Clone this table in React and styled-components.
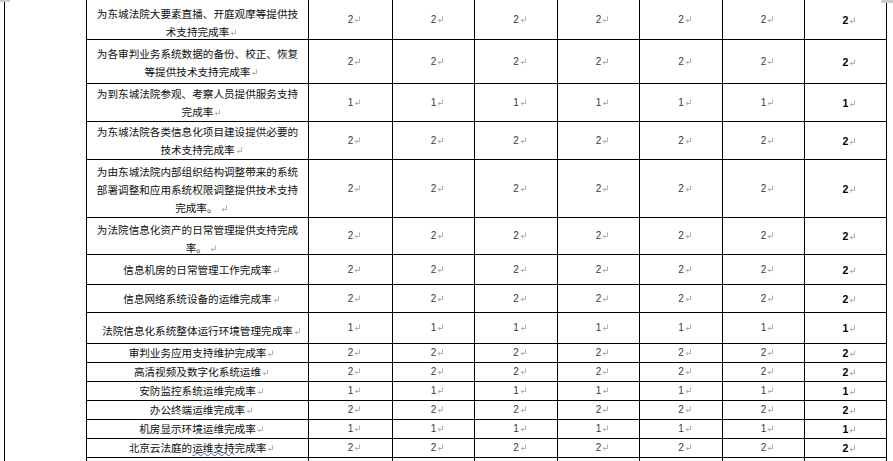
import React from 'react';
import styled, { createGlobalStyle } from 'styled-components';

const Global = createGlobalStyle`
  html, body { margin: 0; padding: 0; background: #fff; }
  body { font-family: "Liberation Sans", "Noto Sans CJK SC", sans-serif; overflow: hidden; }
`;

const Page = styled.div`
  position: relative;
  width: 893px;
  height: 461px;
  overflow: hidden;
  padding-left: 4px;
  box-sizing: border-box;
  background: #fff;
`;

const Handle = styled.div`
  position: absolute;
  top: 0;
  left: ${(p) => p.$left}px;
  width: ${(p) => p.$w}px;
  height: ${(p) => p.$h}px;
  background: #c9c9c9;
`;

const Table = styled.div`
  display: flex;
  align-items: stretch;
  width: 883px;
  border-left: 1px solid #000;
`;

const MergedCell = styled.div`
  flex: 0 0 82px;
  box-sizing: border-box;
  border-right: 1px solid #000;
`;

const Body = styled.div`
  display: flex;
  flex-direction: column;
  width: 800px;
`;

const Row = styled.div`
  display: flex;
  height: ${(p) => p.$h}px;
  flex: 0 0 auto;
`;

const Cell = styled.div`
  box-sizing: border-box;
  width: ${(p) => p.$w}px;
  flex: 0 0 auto;
  border-right: 1px solid #000;
  border-bottom: 1px solid #000;
  display: flex;
  align-items: center;
  justify-content: center;
  text-align: center;
`;

const TextCell = styled(Cell)`
  padding-top: ${(p) => p.$shift || 0}px;
  font-family: "Noto Sans CJK SC", "Liberation Sans", sans-serif;
  font-size: 10.6px;
  line-height: 18px;
  color: #0e0e0e;
  white-space: nowrap;
`;

const NumCell = styled(Cell)`
  font-family: "Liberation Sans", Arial, sans-serif;
  font-size: ${(p) => (p.$bold ? '10.5px' : '10px')};
  font-weight: ${(p) => (p.$bold ? 700 : 400)};
  color: ${(p) => (p.$bold ? '#000' : '#3a3a3a')};
  line-height: 12px;
`;

const MarkBox = styled.span`
  display: inline-block;
  width: 0;
  overflow: visible;
  vertical-align: baseline;
  svg {
    display: block;
    margin-left: 1px;
  }
`;

const Spell = styled.span`
  text-decoration: underline wavy #3c5ad0;
  text-decoration-thickness: 1px;
  text-underline-offset: 0px;
`;

const Mark = () => (
  <MarkBox>
    <svg width="7" height="7" viewBox="0 0 7 7" fill="none" stroke="#b0b0b0" strokeWidth="1">
      <path d="M5.5 0.5 V4.5 H1.2" />
      <path d="M3 2.7 L1.2 4.5 L3 6.3" />
    </svg>
  </MarkBox>
);

const widths = [84, 82, 83, 82, 83, 82, 82];

const rows = [
  { h: 40, shift: 6, lines: ['为东城法院大要素直播、开庭观摩等提供技', '术支持完成率'], v: 2 },
  { h: 44, shift: 3, lines: ['为各审判业务系统数据的备份、校正、恢复', '等提供技术支持完成率'], v: 2 },
  { h: 38, lines: ['为到东城法院参观、考察人员提供服务支持', '完成率'], v: 1 },
  { h: 38, lines: ['为东城法院各类信息化项目建设提供必要的', '技术支持完成率'], v: 2 },
  { h: 58, shift: 2, lines: ['为由东城法院内部组织结构调整带来的系统', '部署调整和应用系统权限调整提供技术支持', '完成率。 '], v: 2 },
  { h: 37, shift: 5, lines: ['为法院信息化资产的日常管理提供支持完成', '率。 '], v: 2 },
  { h: 30, lines: ['信息机房的日常管理工作完成率'], v: 2 },
  { h: 28, lines: ['信息网络系统设备的运维完成率'], v: 2 },
  { h: 31, shift: 6, lines: ['法院信息化系统整体运行环境管理完成率'], v: 1 },
  { h: 19, lines: ['审判业务应用支持维护完成率'], v: 2 },
  { h: 19, lines: ['高清视频及数字化系统运维'], v: 2 },
  { h: 19, lines: ['安防监控系统运维完成率'], v: 1 },
  { h: 19, lines: ['办公终端运维完成率'], v: 2 },
  { h: 19, lines: ['机房显示环境运维完成率'], v: 1 },
  { h: 19, spell: true, lines: ['北京云法庭的运维支持完成率'], v: 2 },
];

function Text({ row }) {
  if (row.spell) {
    return (
      <span>
        北京云法庭的<Spell>运维支持</Spell>完成率
        <Mark />
      </span>
    );
  }
  return (
    <span>
      {row.lines.map((l, i) => (
        <React.Fragment key={i}>
          {i > 0 && <br />}
          {l}
          {i === row.lines.length - 1 && <Mark />}
        </React.Fragment>
      ))}
    </span>
  );
}

export default function App() {
  return (
    <>
      <Global />
      <Page>
        <Table>
          <MergedCell />
          <Body>
            {rows.map((row, i) => (
              <Row key={i} $h={row.h}>
                <TextCell $w={222} $shift={row.shift}>
                  <Text row={row} />
                </TextCell>
                {widths.map((w, j) => (
                  <NumCell key={j} $w={w} $bold={j === widths.length - 1}>
                    <span>
                      {row.v}
                      <Mark />
                    </span>
                  </NumCell>
                ))}
              </Row>
            ))}
            <Row $h={30}>
              <TextCell $w={222} />
              {widths.map((w, j) => (
                <NumCell key={j} $w={w} />
              ))}
            </Row>
          </Body>
        </Table>
        <Handle $left={0} $w={10} $h={2} />
        <Handle $left={881} $w={12} $h={3} />
      </Page>
    </>
  );
}
